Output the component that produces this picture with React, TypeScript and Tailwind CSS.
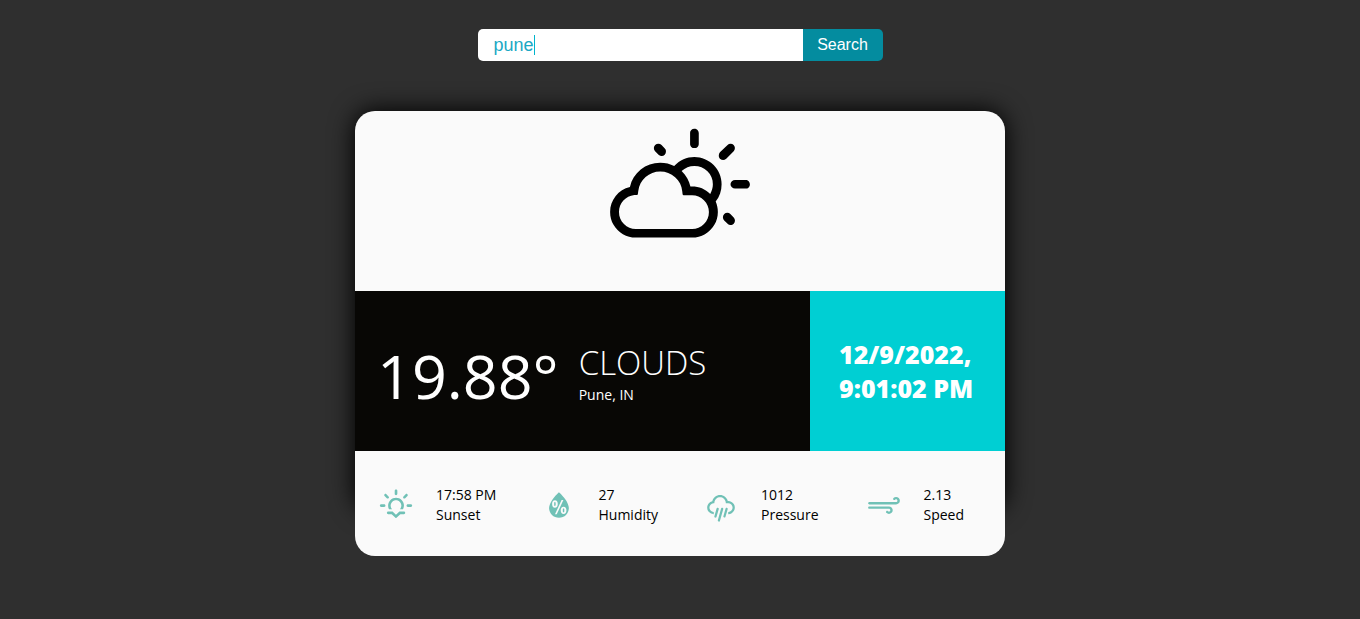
import { useState } from "react";
import type { IconType } from "react-icons";
import { WiDayCloudy, WiHumidity, WiRain, WiStrongWind, WiSunset } from "react-icons/wi";

const details: { icon: IconType; value: string; label: string }[] = [
  { icon: WiSunset, value: "17:58 PM", label: "Sunset" },
  { icon: WiHumidity, value: "27", label: "Humidity" },
  { icon: WiRain, value: "1012", label: "Pressure" },
  { icon: WiStrongWind, value: "2.13", label: "Speed" },
];

export default function App() {
  const [city, setCity] = useState("pune");

  return (
    <main className="flex min-h-screen flex-col items-center bg-[#2f2f2f] px-4 pt-[29px] pb-8 font-['Open_Sans','Noto_Sans',sans-serif]">
      <form
        className="flex h-8 w-full max-w-[405px] overflow-hidden rounded-[5px] font-['Liberation_Sans',Arial,sans-serif]"
        onSubmit={(e) => e.preventDefault()}
      >
        <div className="relative flex min-w-0 flex-1">
          <input
            type="text"
            aria-label="City"
            value={city}
            onChange={(e) => setCity(e.target.value)}
            className="peer w-full bg-white px-4 text-lg text-[#1ba8c4] caret-[#00b4cc] outline-none"
          />
          <span
            aria-hidden="true"
            className="pointer-events-none absolute top-1.5 left-14 h-5 w-px bg-[#00b4cc] peer-focus:hidden"
          />
        </div>
        <button type="submit" className="w-20 bg-[#048c9f] text-base text-white">
          Search
        </button>
      </form>

      <article className="relative mt-[50px] w-full max-w-[650px]">
        <div className="absolute inset-x-0 top-0 bottom-[45px] rounded-[20px] shadow-[0_0_25px_1px_#000]" />
        <div className="relative overflow-hidden rounded-[20px] bg-[#fafafa]">
          <div className="flex h-[180px] justify-center pt-[13px]">
            <WiDayCloudy className="size-[156px] text-black" />
          </div>

          <div className="flex h-40 text-white">
            <div className="flex w-[70%] items-center gap-5 bg-[#080705] pt-2 pl-[22px]">
              <div className="text-[61px] leading-none">19.88°</div>
              <div>
                <div className="text-[33px] leading-10 font-light">CLOUDS</div>
                <div className="text-sm leading-6">Pune, IN</div>
              </div>
            </div>
            <div className="flex w-[30%] items-center bg-[#00cfd3] pl-[29px] text-[25px] leading-[34px] font-extrabold">
              <time>
                12/9/2022,
                <br />
                9:01:02 PM
              </time>
            </div>
          </div>

          <div className="grid grid-cols-4 items-center pt-[34px] pb-[31px]">
            {details.map(({ icon: Icon, value, label }) => (
              <div key={label} className="flex items-center gap-5 pl-[21px]">
                <Icon className="size-10 shrink-0 text-[#70c1b6]" />
                <p className="text-sm leading-5 text-black">
                  {value}
                  <br />
                  {label}
                </p>
              </div>
            ))}
          </div>
        </div>
      </article>
    </main>
  );
}
